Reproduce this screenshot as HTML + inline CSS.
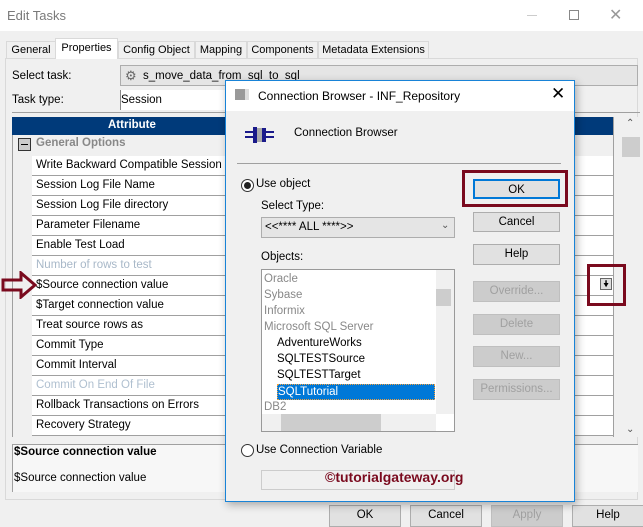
<!DOCTYPE html>
<html><head><style>
*{box-sizing:border-box;margin:0;padding:0}
body{width:643px;height:525px;overflow:hidden;background:#f0f0f0;font-family:"Liberation Sans",sans-serif;font-size:11.5px;color:#000;position:relative}
.a{position:absolute}
.t{position:absolute;white-space:nowrap}
.btn{position:absolute;background:#e1e1e1;border:1px solid #adadad;text-align:center;line-height:18px}
.dis{color:#a0a0a0;background:#ccc;border-color:#bfbfbf}
.row{position:absolute;left:32px;width:581px;height:20px;border-bottom:1px solid #a0a0a0;background:#fff;padding-left:4px;line-height:19px}
.g{color:#a8a8a8}
.tab{position:absolute;top:41px;height:18px;border:1px solid #d9d9d9;text-align:center;line-height:16px;font-size:11px}
</style></head><body>
<div class="a" style="left:0;top:0;width:643px;height:31px;background:#fff"></div>
<div class="t" style="left:7px;top:8px;font-size:13px;color:#7a7a7a">Edit Tasks</div>
<div class="a" style="left:527px;top:15px;width:10px;height:1px;background:#ccc"></div>
<div class="a" style="left:569px;top:10px;width:10px;height:10px;border:1px solid #888"></div>
<div class="t" style="left:609px;top:5px;font-size:16px;color:#999">✕</div>
<!-- tabs -->
<div class="a" style="left:5px;top:58px;width:633px;height:442px;border:1px solid #d9d9d9;background:#f0f0f0"></div>
<div class="tab" style="left:6px;width:50px">General</div>
<div class="tab" style="left:55px;top:38px;height:21px;width:63px;border-bottom:none;background:#fff;line-height:18px">Properties</div>
<div class="tab" style="left:118px;width:77px">Config Object</div>
<div class="tab" style="left:195px;width:52px">Mapping</div>
<div class="tab" style="left:247px;width:71px">Components</div>
<div class="tab" style="left:318px;width:111px">Metadata Extensions</div>
<div class="t" style="left:12px;top:70px">Select task:</div>
<div class="a" style="left:120px;top:65px;width:518px;height:21px;background:#e5e5e5;border:1px solid #adadad"></div>
<div class="t" style="left:125px;top:68px;color:#666;font-size:13px">⚙</div>
<div class="t" style="left:143px;top:70px">s_move_data_from_sql_to_sql</div>
<div class="t" style="left:12px;top:94px">Task type:</div>
<div class="a" style="left:120px;top:90px;width:110px;height:20px;background:#fff;border-left:1px solid #888"></div>
<div class="t" style="left:121px;top:94px">Session</div>
<div class="a" style="left:12px;top:112px;width:628px;height:1px;background:#a0a0a0"></div>
<!-- grid -->
<div class="a" style="left:12px;top:117px;width:602px;height:320px;background:#f0f0f0;border-left:1px solid #a0a0a0"></div>
<div class="a" style="left:12px;top:117px;width:602px;height:18px;background:#003a7a"></div>
<div class="t" style="left:108px;top:119px;color:#fff;font-weight:bold">Attribute</div>
<div class="a" style="left:18px;top:138px;width:13px;height:13px;border:1px solid #333;background:#ccc"></div><div class="a" style="left:21px;top:144px;width:7px;height:1px;background:#000"></div>
<div class="t" style="left:36px;top:137px;color:#888;font-weight:bold">General Options</div>
<div class="row" style="top:156px">Write Backward Compatible Session Log</div>
<div class="row" style="top:176px">Session Log File Name</div>
<div class="row" style="top:196px">Session Log File directory</div>
<div class="row" style="top:216px">Parameter Filename</div>
<div class="row" style="top:236px">Enable Test Load</div>
<div class="row g" style="top:256px;color:#a8b8c8">Number of rows to test</div>
<div class="row" style="top:276px">$Source connection value</div>
<div class="row" style="top:296px">$Target connection value</div>
<div class="row" style="top:316px">Treat source rows as</div>
<div class="row" style="top:336px">Commit Type</div>
<div class="row" style="top:356px">Commit Interval</div>
<div class="row g" style="top:376px;color:#b0c0d0">Commit On End Of File</div>
<div class="row" style="top:396px">Rollback Transactions on Errors</div>
<div class="row" style="top:416px">Recovery Strategy</div>
<div class="a" style="left:613px;top:117px;width:1px;height:320px;background:#a0a0a0"></div>
<div class="a" style="left:622px;top:117px;width:18px;height:320px;background:#f0f0f0"></div>
<div class="a" style="left:622px;top:137px;width:18px;height:20px;background:#cdcdcd"></div>
<div class="t" style="left:626px;top:118px;font-size:10px;color:#555">⌃</div>
<div class="t" style="left:626px;top:424px;font-size:10px;color:#555">⌄</div>
<div class="a" style="left:600px;top:278px;width:12px;height:12px;border:1px solid #666;background:#ddd;font-size:9px;line-height:10px;text-align:center">🠟</div>
<div class="a" style="left:587px;top:264px;width:39px;height:42px;border:3px solid #7a0a1e"></div>
<svg class="a" style="left:1px;top:271px" width="36" height="28"><path d="M2 9H20V2L34 14L20 26V19H2Z" fill="none" stroke="#7a0a1e" stroke-width="3"/></svg>
<!-- description -->
<div class="a" style="left:12px;top:444px;width:626px;height:48px;border-left:1px solid #a0a0a0;border-top:1px solid #a0a0a0;background:#f7f7f7"></div>
<div class="t" style="left:14px;top:446px;font-weight:bold">$Source connection value</div>
<div class="t" style="left:14px;top:472px">$Source connection value</div>
<div class="btn" style="left:329px;top:505px;width:72px;height:22px">OK</div>
<div class="btn" style="left:410px;top:505px;width:72px;height:22px">Cancel</div>
<div class="btn dis" style="left:491px;top:505px;width:72px;height:22px">Apply</div>
<div class="btn" style="left:572px;top:505px;width:72px;height:22px">Help</div>
<!-- dialog -->
<div class="a" style="left:225px;top:80px;width:350px;height:422px;background:#f0f0f0;border:1px solid #1883d7;box-shadow:2px 3px 8px rgba(0,0,0,.3)"></div>
<div class="a" style="left:226px;top:81px;width:348px;height:30px;background:#fff"></div>
<div class="a" style="left:235px;top:89px;width:14px;height:11px;background:#999;border-right:4px solid #ddd"></div>
<div class="t" style="left:258px;top:89px;font-size:12px">Connection Browser - INF_Repository</div>
<div class="t" style="left:551px;top:84px;font-size:17px">✕</div>
<svg class="a" style="left:243px;top:125px" width="34" height="20"><rect x="2" y="6" width="8" height="2" fill="#1a1a8a"/><rect x="2" y="11" width="8" height="2" fill="#1a1a8a"/><rect x="23" y="6" width="8" height="2" fill="#1a1a8a"/><rect x="23" y="11" width="8" height="2" fill="#1a1a8a"/><rect x="10" y="2" width="4" height="16" fill="#1a1a8a"/><rect x="14" y="3" width="5" height="14" fill="#aaa"/><rect x="19" y="3" width="4" height="14" fill="#1a1a8a"/></svg>
<div class="t" style="left:294px;top:127px">Connection Browser</div>
<div class="a" style="left:237px;top:163px;width:324px;height:1px;background:#a0a0a0"></div>
<div class="a" style="left:241px;top:179px;width:13px;height:13px;border:1px solid #333;border-radius:50%;background:#fff"></div><div class="a" style="left:244px;top:182px;width:7px;height:7px;border-radius:50%;background:#222"></div>
<div class="t" style="left:256px;top:178px">Use object</div>
<div class="t" style="left:261px;top:200px">Select Type:</div>
<div class="a" style="left:261px;top:217px;width:194px;height:21px;background:#e5e5e5;border:1px solid #adadad"></div>
<div class="t" style="left:265px;top:221px">&lt;&lt;**** ALL ****&gt;&gt;</div>
<div class="t" style="left:441px;top:220px;font-size:10px;color:#555">⌄</div>
<div class="t" style="left:261px;top:251px">Objects:</div>
<div class="a" style="left:261px;top:269px;width:194px;height:163px;background:#fff;border:1px solid #999"></div>
<div class="t" style="left:264px;top:273px;color:#888">Oracle</div>
<div class="t" style="left:264px;top:289px;color:#888">Sybase</div>
<div class="t" style="left:264px;top:305px;color:#888">Informix</div>
<div class="t" style="left:264px;top:321px;color:#888">Microsoft SQL Server</div>
<div class="t" style="left:277px;top:337px">AdventureWorks</div>
<div class="t" style="left:277px;top:353px">SQLTESTSource</div>
<div class="t" style="left:277px;top:369px">SQLTESTTarget</div>
<div class="a" style="left:277px;top:384px;width:158px;height:16px;background:#0078d7;border:1px dotted #f0a040"></div>
<div class="t" style="left:278px;top:386px;color:#fff">SQLTutorial</div>
<div class="t" style="left:264px;top:401px;color:#888">DB2</div>
<div class="a" style="left:436px;top:270px;width:18px;height:144px;background:#f0f0f0"></div>
<div class="a" style="left:436px;top:289px;width:15px;height:17px;background:#cdcdcd"></div>
<div class="a" style="left:262px;top:414px;width:174px;height:17px;background:#f0f0f0"></div>
<div class="a" style="left:281px;top:414px;width:100px;height:17px;background:#cdcdcd"></div>
<div class="btn" style="left:473px;top:179px;width:87px;height:20px;border:2px solid #0078d7">OK</div>
<div class="a" style="left:462px;top:170px;width:106px;height:37px;border:3px solid #7a0a1e"></div>
<div class="btn" style="left:473px;top:212px;width:87px;height:20px">Cancel</div>
<div class="btn" style="left:473px;top:244px;width:87px;height:21px">Help</div>
<div class="btn dis" style="left:473px;top:281px;width:87px;height:21px">Override...</div>
<div class="btn dis" style="left:473px;top:314px;width:87px;height:21px">Delete</div>
<div class="btn dis" style="left:473px;top:346px;width:87px;height:21px">New...</div>
<div class="btn dis" style="left:473px;top:379px;width:87px;height:21px">Permissions...</div>
<div class="a" style="left:241px;top:444px;width:13px;height:13px;border:1px solid #333;border-radius:50%;background:#fff"></div>
<div class="t" style="left:256px;top:444px">Use Connection Variable</div>
<div class="a" style="left:261px;top:470px;width:194px;height:20px;border:1px solid #ccc;background:#f0f0f0"></div>
<div class="t" style="left:325px;top:469px;color:#7a0a1e;font-weight:bold;font-size:14px">©tutorialgateway.org</div>
</body></html>
